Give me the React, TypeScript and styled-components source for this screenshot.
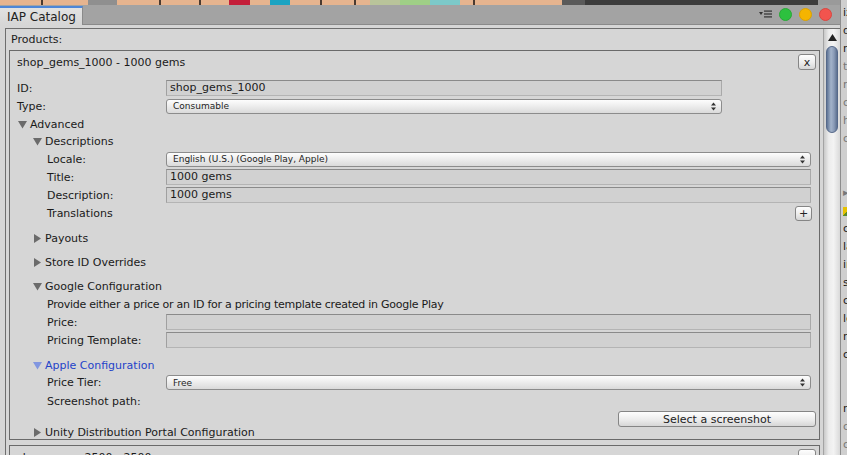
import React from "react";
import styled, { createGlobalStyle } from "styled-components";

const GlobalStyle = createGlobalStyle`
  html, body { margin: 0; padding: 0; }
  body {
    width: 847px; height: 455px; overflow: hidden;
    background: #cbcbcb;
    font-family: "DejaVu Sans", "Liberation Sans", sans-serif;
    font-size: 11px; color: #1a1a1a;
  }
  * { box-sizing: border-box; }
`;

const Screen = styled.div`
  display: flex;
  width: 847px;
  height: 455px;
  overflow: hidden;
`;

const EditorWindow = styled.div`
  width: 840px;
  flex: none;
  display: flex;
  flex-direction: column;
`;

const Backdrop = styled.div`
  height: 5px;
  flex: none;
  background: linear-gradient(to right,
    #e6b48f 0 41px, #4a3a30 41px 43px, #e6b48f 43px 88px, #8f8f8f 88px 117px,
    #e6b48f 117px 159px, #4a3a30 159px 161px, #e6b48f 161px 199px, #4a3a30 199px 201px,
    #e6b48f 201px 229px, #c41e3a 229px 250px, #e6b48f 250px 270px, #1aa3c2 270px 290px,
    #e6b48f 290px 320px, #4a3a30 320px 322px, #e6b48f 322px 354px, #4a3a30 354px 356px,
    #e6b48f 356px 370px, #b9c49a 370px 400px, #9fcf86 400px 430px, #7cc9c9 430px 460px,
    #e6b48f 460px 473px, #4a3a30 473px 475px, #e6b48f 475px 562px, #5a5a5a 562px 585px,
    #3c3c3c 585px 818px, #9a9a9a 818px 840px);
`;

const TabStrip = styled.div`
  height: 20px;
  flex: none;
  display: flex;
  align-items: flex-end;
  justify-content: space-between;
  background: #a3a3a3;
  border-bottom: 1px solid #8a8a8a;
`;

const Tab = styled.div`
  width: 83px;
  height: 19px;
  margin-bottom: -1px;
  padding-left: 7px;
  display: flex;
  align-items: center;
  font-size: 12px;
  color: #222;
  background: linear-gradient(#e2e2e2, #d6d6d6);
  border-top: 2px solid #4d86d8;
  border-right: 1px solid #8a8a8a;
`;

const WindowControls = styled.div`
  align-self: center;
  display: flex;
  align-items: center;
  gap: 7px;
  padding-right: 8px;
  margin-top: -1px;
`;

const MenuIcon = styled.svg`
  width: 14px;
  height: 8px;
  margin-right: -1px;
`;

const Light = styled.div<{ $color: string; $edge: string }>`
  width: 13px;
  height: 13px;
  border-radius: 50%;
  background: ${(p) => p.$color};
  border: 1px solid ${(p) => p.$edge};
`;

const WindowBody = styled.div`
  flex: 1;
  min-height: 0;
  display: flex;
  padding: 3px 0 0 5px;
  background: #d6d6d6;
`;

const OuterBox = styled.div`
  flex: 1;
  display: flex;
  min-height: 0;
  border-top: 1px solid #6e6e6e;
  border-left: 1px solid #6e6e6e;
  overflow: hidden;
`;

const ListColumn = styled.div`
  flex: 1;
  display: flex;
  flex-direction: column;
  min-width: 0;
`;

const ProductsLabel = styled.div`
  height: 21px;
  flex: none;
  padding-left: 5px;
  line-height: 21px;
`;

const ProductList = styled.div`
  display: flex;
  flex-direction: column;
  gap: 5px;
  padding: 0 3px 0 3px;
`;

const Card = styled.div`
  flex: none;
  border: 1px solid #6a6a6a;
  padding: 0 0 1px 7px;
  display: flex;
  flex-direction: column;
`;

const HeaderRow = styled.div`
  height: 22px;
  display: flex;
  align-items: center;
  justify-content: space-between;
  padding-right: 3px;
`;

const Row = styled.div<{ $h?: number; $mt?: number }>`
  height: ${(p) => p.$h ?? 18}px;
  margin-top: ${(p) => p.$mt ?? 0}px;
  display: flex;
  align-items: center;
`;

const Label = styled.div<{ $indent?: number }>`
  width: 149px;
  flex: none;
  padding-left: ${(p) => p.$indent ?? 0}px;
  white-space: nowrap;
`;

const Text = styled.div<{ $indent?: number; $tight?: boolean }>`
  padding-left: ${(p) => p.$indent ?? 0}px;
  letter-spacing: ${(p) => (p.$tight ? "-0.25px" : "normal")};
  white-space: nowrap;
`;

const TextField = styled.div<{ $mr: number }>`
  flex: 1;
  height: 16px;
  margin-right: ${(p) => p.$mr}px;
  padding-left: 3px;
  line-height: 14px;
  background: #d1d1d1;
  border: 1px solid;
  border-color: #8a8a8a #a9a9a9 #b4b4b4 #a0a0a0;
  white-space: nowrap;
`;

const Popup = styled.div<{ $mr: number }>`
  flex: 1;
  height: 15px;
  margin-right: ${(p) => p.$mr}px;
  padding: 0 5px 0 6px;
  display: flex;
  align-items: center;
  justify-content: space-between;
  font-size: 9px;
  color: #1e1e1e;
  border: 1px solid #8c8c8c;
  border-radius: 3px;
  background: linear-gradient(#fdfdfd, #ececec 50%, #dadada);
`;

const Foldout = styled.div<{ $indent: number; $blue?: boolean }>`
  display: flex;
  align-items: center;
  gap: 3px;
  padding-left: ${(p) => p.$indent}px;
  color: ${(p) => (p.$blue ? "#2443c9" : "#1a1a1a")};
  white-space: nowrap;
`;

const SmallButton = styled.div<{ $w: number; $h: number; $mr: number }>`
  width: ${(p) => p.$w}px;
  height: ${(p) => p.$h}px;
  margin-right: ${(p) => p.$mr}px;
  display: flex;
  align-items: center;
  justify-content: center;
  flex: none;
  font-size: 11px;
  line-height: 1;
  color: #222;
  border: 1px solid #858585;
  border-radius: 3px;
  background: linear-gradient(#fefefe, #ececec 55%, #d6d6d6);
`;

const SpreadRow = styled(Row)`
  justify-content: space-between;
`;

const EndRow = styled(Row)`
  justify-content: flex-end;
`;

const Scrollbar = styled.div`
  width: 17px;
  flex: none;
  display: flex;
  flex-direction: column;
  align-items: center;
  border-left: 1px solid #a3a3a3;
  background: linear-gradient(to right, #c9c9c9, #ececec 30%, #f3f3f3 60%, #d9d9d9);
`;

const ScrollArrow = styled.div`
  height: 17px;
  display: flex;
  align-items: center;
  justify-content: center;
`;

const Thumb = styled.div`
  width: 12px;
  height: 87px;
  border-radius: 6px;
  border: 1px solid #56698a;
  background: linear-gradient(to right, #5f7496, #a3b3ca 40%, #8a9bb7 70%, #5e7190);
`;

const SidePanel = styled.div`
  width: 7px;
  flex: none;
  overflow: hidden;
  padding: 4px 0 0 2px;
  background: #cfcfcf;
  border-left: 1px solid #8d8d8d;
`;

const SideLine = styled.div<{ $muted?: boolean }>`
  height: 18px;
  line-height: 18px;
  white-space: nowrap;
  color: ${(p) => (p.$muted ? "#777" : "#1a1a1a")};
`;

const SideIcon = styled.span`
  display: inline-block;
  width: 8px;
  height: 9px;
  vertical-align: middle;
  background: linear-gradient(135deg, #e6c100 50%, #5c8a2a 50%);
`;

const Tri = ({ open, color = "#6b6b6b" }: { open: boolean; color?: string }) => (
  <svg width="9" height="9" viewBox="0 0 9 9">
    {open ? (
      <polygon points="0,1 9,1 4.5,8.5" fill={color} />
    ) : (
      <polygon points="1,0 8,4.5 1,9" fill={color} />
    )}
  </svg>
);

const PopupArrows = () => (
  <svg width="5" height="9" viewBox="0 0 5 9">
    <polygon points="0,3.5 2.5,0.5 5,3.5" fill="#333" />
    <polygon points="0,5.5 2.5,8.5 5,5.5" fill="#333" />
  </svg>
);

const sideLines: { t: string; muted?: boolean; icon?: boolean }[] = [
  { t: "iz" }, { t: "d" }, { t: "n" }, { t: "t", muted: true }, { t: "r", muted: true },
  { t: "c", muted: true }, { t: "h", muted: true }, { t: "c", muted: true }, { t: "" }, { t: "" },
  { t: "▸", muted: true }, { t: "", icon: true }, { t: "c" }, { t: "la" }, { t: "ir" },
  { t: "s" }, { t: "c" }, { t: "le" }, { t: "n" }, { t: "c" }, { t: "" }, { t: "" },
  { t: "n" }, { t: "c", muted: true }, { t: "c", muted: true },
];

export default function App() {
  return (
    <>
      <GlobalStyle />
      <Screen>
        <EditorWindow>
          <Backdrop />
          <TabStrip>
            <Tab>IAP Catalog</Tab>
            <WindowControls>
              <MenuIcon viewBox="0 0 14 8">
                <polygon points="0,2 4,2 2,5" fill="#333" />
                <rect x="5" y="0.5" width="8" height="1.2" fill="#333" />
                <rect x="5" y="3.4" width="8" height="1.2" fill="#333" />
                <rect x="5" y="6.3" width="8" height="1.2" fill="#333" />
              </MenuIcon>
              <Light $color="#2dc13f" $edge="#28a837" />
              <Light $color="#f5b400" $edge="#dba200" />
              <Light $color="#f2544e" $edge="#d94640" />
            </WindowControls>
          </TabStrip>
          <WindowBody>
            <OuterBox>
              <ListColumn>
                <ProductsLabel>Products:</ProductsLabel>
                <ProductList>
                  <Card>
                    <HeaderRow>
                      <Text>shop_gems_1000 - 1000 gems</Text>
                      <SmallButton $w={18} $h={16} $mr={0}>x</SmallButton>
                    </HeaderRow>
                    <Row $mt={6}>
                      <Label>ID:</Label>
                      <TextField $mr={97}>shop_gems_1000</TextField>
                    </Row>
                    <Row>
                      <Label>Type:</Label>
                      <Popup $mr={97}>
                        <span>Consumable</span>
                        <PopupArrows />
                      </Popup>
                    </Row>
                    <Row>
                      <Foldout $indent={1}>
                        <Tri open />
                        Advanced
                      </Foldout>
                    </Row>
                    <Row $h={17}>
                      <Foldout $indent={16}>
                        <Tri open />
                        Descriptions
                      </Foldout>
                    </Row>
                    <Row>
                      <Label $indent={30}>Locale:</Label>
                      <Popup $mr={8}>
                        <span>English (U.S.) (Google Play, Apple)</span>
                        <PopupArrows />
                      </Popup>
                    </Row>
                    <Row>
                      <Label $indent={30}>Title:</Label>
                      <TextField $mr={8}>1000 gems</TextField>
                    </Row>
                    <Row>
                      <Label $indent={30}>Description:</Label>
                      <TextField $mr={8}>1000 gems</TextField>
                    </Row>
                    <SpreadRow>
                      <Text $indent={30}>Translations</Text>
                      <SmallButton $w={17} $h={15} $mr={7}>+</SmallButton>
                    </SpreadRow>
                    <Row $mt={7}>
                      <Foldout $indent={16}>
                        <Tri open={false} />
                        Payouts
                      </Foldout>
                    </Row>
                    <Row $mt={6}>
                      <Foldout $indent={16}>
                        <Tri open={false} />
                        Store ID Overrides
                      </Foldout>
                    </Row>
                    <Row $mt={6} $h={18}>
                      <Foldout $indent={16}>
                        <Tri open />
                        Google Configuration
                      </Foldout>
                    </Row>
                    <Row>
                      <Text $indent={30} $tight>
                        Provide either a price or an ID for a pricing template created in Google Play
                      </Text>
                    </Row>
                    <Row>
                      <Label $indent={30}>Price:</Label>
                      <TextField $mr={8} />
                    </Row>
                    <Row>
                      <Label $indent={30}>Pricing Template:</Label>
                      <TextField $mr={8} />
                    </Row>
                    <Row $mt={8} $h={16}>
                      <Foldout $indent={16} $blue>
                        <Tri open color="#8196e0" />
                        Apple Configuration
                      </Foldout>
                    </Row>
                    <Row $h={19}>
                      <Label $indent={30}>Price Tier:</Label>
                      <Popup $mr={8}>
                        <span>Free</span>
                        <PopupArrows />
                      </Popup>
                    </Row>
                    <Row $h={19}>
                      <Label $indent={30}>Screenshot path:</Label>
                    </Row>
                    <EndRow $h={16}>
                      <SmallButton $w={198} $h={16} $mr={3}>Select a screenshot</SmallButton>
                    </EndRow>
                    <Row $h={11}>
                      <Foldout $indent={16}>
                        <Tri open={false} />
                        Unity Distribution Portal Configuration
                      </Foldout>
                    </Row>
                  </Card>
                  <Card>
                    <HeaderRow>
                      <Text>shop_gems_2500 - 2500 gems</Text>
                      <SmallButton $w={18} $h={16} $mr={0}>x</SmallButton>
                    </HeaderRow>
                  </Card>
                </ProductList>
              </ListColumn>
              <Scrollbar>
                <ScrollArrow>
                  <svg width="9" height="7" viewBox="0 0 9 7">
                    <polygon points="0,7 4.5,0 9,7" fill="#222" />
                  </svg>
                </ScrollArrow>
                <Thumb />
              </Scrollbar>
            </OuterBox>
          </WindowBody>
        </EditorWindow>
        <SidePanel>
          {sideLines.map((l, i) => (
            <SideLine key={i} $muted={l.muted}>
              {l.icon ? <SideIcon /> : l.t}
            </SideLine>
          ))}
        </SidePanel>
      </Screen>
    </>
  );
}
